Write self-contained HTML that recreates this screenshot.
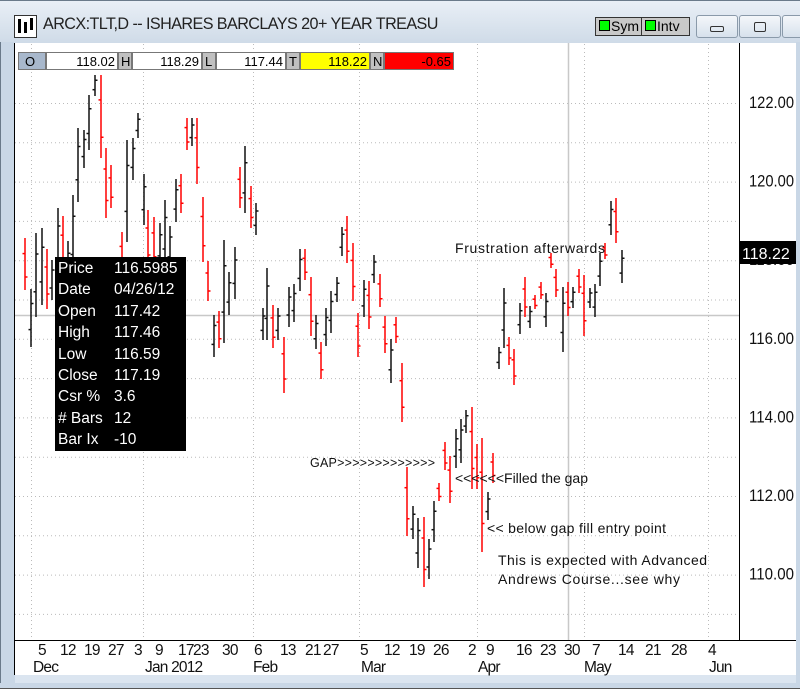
<!DOCTYPE html>
<html><head><meta charset="utf-8"><style>
body{margin:0;width:800px;height:688px;overflow:hidden;background:#dbe5f0;font-family:"Liberation Sans",sans-serif;position:relative}
.abs{position:absolute}
</style></head><body>
<div class="abs" style="left:0;top:0;width:800px;height:42px;background:linear-gradient(#e9eff6,#cfdbe8);border-top:1px solid #6a7a8a"></div>
<div class="abs" style="left:14px;top:15px;width:21px;height:21px;background:#fff;border:1px solid #333"><div style="position:absolute;left:3px;top:3px;width:3px;height:14px;background:#000"></div><div style="position:absolute;left:9px;top:6px;width:3px;height:11px;background:#000"></div><div style="position:absolute;left:15px;top:2px;width:3px;height:12px;background:#000"></div></div>
<div class="abs" style="left:43px;top:14px;font-size:17px;color:#222;letter-spacing:-0.6px;transform:scaleX(0.95);transform-origin:left">ARCX:TLT,D -- ISHARES BARCLAYS 20+ YEAR TREASU</div>
<div class="abs" style="left:595px;top:17px;width:45px;height:17px;background:#c8c8c8;border:1px solid #333;font-size:14px;line-height:17px"><span style="display:inline-block;width:9px;height:9px;background:#0f0;border:1px solid #000;margin:0 1px 0 3px"></span>Sym</div>
<div class="abs" style="left:641px;top:17px;width:47px;height:17px;background:#c8c8c8;border:1px solid #333;font-size:14px;line-height:17px"><span style="display:inline-block;width:9px;height:9px;background:#0f0;border:1px solid #000;margin:0 1px 0 3px"></span>Intv</div>
<div class="abs" style="left:696px;top:15px;width:40px;height:21px;border:1px solid #8a9aaa;border-radius:3px;background:linear-gradient(#f4f7fa,#d7e1ec)"><div style="margin:10px auto 0;width:12px;height:4px;border:1px solid #333;border-radius:2px"></div></div>
<div class="abs" style="left:739px;top:15px;width:40px;height:21px;border:1px solid #8a9aaa;border-radius:3px;background:linear-gradient(#f4f7fa,#d7e1ec)"><div style="margin:6px auto 0;width:10px;height:8px;border:1px solid #333;border-radius:2px"></div></div>
<div class="abs" style="left:782px;top:15px;width:30px;height:21px;border:1px solid #8a9aaa;border-radius:3px;background:linear-gradient(#f4f7fa,#d7e1ec)"></div>
<div class="abs" style="left:0;top:42px;width:14px;height:646px;background:#c9d7e6;border-left:1px solid #6a7a8a"></div>
<div class="abs" style="left:796px;top:42px;width:4px;height:646px;background:#c9d7e6"></div>
<div class="abs" style="left:0;top:683px;width:800px;height:5px;background:#c9d7e6;border-bottom:1px solid #555"></div>
<svg class="abs" style="left:0;top:0" width="800" height="688" id="ch">
<rect x="14" y="43" width="782" height="632" fill="#fff"/>
<line x1="14.5" y1="43" x2="14.5" y2="675" stroke="#000"/>
<line x1="739.5" y1="43" x2="739.5" y2="640" stroke="#000"/>
<line x1="14" y1="640.5" x2="796" y2="640.5" stroke="#000"/>
<g id="grid" stroke="#bbb" stroke-dasharray="1,3"></g>
<line x1="15" y1="315.5" x2="739" y2="315.5" stroke="#c8c8c8" stroke-width="1.5"/>
<line x1="568.5" y1="43" x2="568.5" y2="640" stroke="#c8c8c8" stroke-width="1.5"/>
<g id="bars" stroke-width="1.5"></g>
<g font-family="Liberation Sans,sans-serif" font-size="15" fill="#111" id="ax"></g>
<rect x="739" y="241" width="57" height="23" fill="#000"/>
<text x="742" y="259" font-size="16" fill="#fff" font-family="Liberation Sans,sans-serif">118.22</text>
<g font-family="Liberation Sans,sans-serif" font-size="14" fill="#111">
<text x="455" y="253" textLength="150">Frustration afterwards</text>
<text x="310" y="467" font-size="12.5" textLength="125">GAP&gt;&gt;&gt;&gt;&gt;&gt;&gt;&gt;&gt;&gt;&gt;&gt;&gt;</text>
<text x="455" y="483" textLength="133">&lt;&lt;&lt;&lt;&lt;&lt;Filled the gap</text>
<text x="487" y="533" textLength="179">&lt;&lt; below gap fill entry point</text>
<text x="498" y="565" textLength="209">This is expected with Advanced</text>
<text x="498" y="584" textLength="182">Andrews Course...see why</text>
</g>
</svg>
<div class="abs" style="left:18px;top:52px;height:18px;font-size:13px;line-height:18px;display:flex">
<div style="width:20px;background:#a8b8cc;border:1px solid #777;padding-left:6px">O</div>
<div style="width:68px;background:#fff;border:1px solid #777;text-align:right;padding-right:2px">118.02</div>
<div style="width:10px;background:#c0c0c0;border:1px solid #777;padding-left:2px">H</div>
<div style="width:66px;background:#fff;border:1px solid #777;text-align:right;padding-right:2px">118.29</div>
<div style="width:10px;background:#c0c0c0;border:1px solid #777;padding-left:2px">L</div>
<div style="width:66px;background:#fff;border:1px solid #777;text-align:right;padding-right:2px">117.44</div>
<div style="width:10px;background:#c0c0c0;border:1px solid #777;padding-left:2px">T</div>
<div style="width:66px;background:#ff0;border:1px solid #777;text-align:right;padding-right:2px">118.22</div>
<div style="width:10px;background:#c0c0c0;border:1px solid #777;padding-left:2px">N</div>
<div style="width:66px;background:#f00;border:1px solid #777;text-align:right;padding-right:2px">-0.65</div>
</div>
<div class="abs" style="left:55px;top:257px;width:128px;height:193px;background:#000;color:#fff;font-size:15.5px;line-height:21.4px;padding:1px 0 0 3px">
<div><span style="display:inline-block;width:56px">Price</span>116.5985</div>
<div><span style="display:inline-block;width:56px">Date</span>04/26/12</div>
<div><span style="display:inline-block;width:56px">Open</span>117.42</div>
<div><span style="display:inline-block;width:56px">High</span>117.46</div>
<div><span style="display:inline-block;width:56px">Low</span>116.59</div>
<div><span style="display:inline-block;width:56px">Close</span>117.19</div>
<div><span style="display:inline-block;width:56px">Csr %</span>3.6</div>
<div><span style="display:inline-block;width:56px"># Bars</span>12</div>
<div><span style="display:inline-block;width:56px">Bar Ix</span>-10</div>
</div>
<script>
var NS="http://www.w3.org/2000/svg";
function el(p,t,a,txt){var e=document.createElementNS(NS,t);for(var k in a)e.setAttribute(k,a[k]);if(txt)e.textContent=txt;p.appendChild(e);return e;}
var g=document.getElementById("grid");
for(var k=0;k<14;k++){var y=103.5+k*39.3;if(y>640)break;el(g,"line",{x1:15,y1:y,x2:739,y2:y});}
[31,143,253,359,477,584,708].forEach(function(x){el(g,"line",{x1:x+.5,y1:44,x2:x+.5,y2:640});});
var D=[[25,238,290,'r'],[31,289,347,'b'],[36,233,317,'b'],[42,228,305,'b'],[47,249,309,'r'],[52,260,300,'b'],[58,208,280,'b'],[63,216,280,'r'],[68,241,290,'b'],[73,195,280,'b'],[78,128,202,'b'],[84,130,168,'b'],[89,95,150,'b'],[95,75,96,'b'],[101,75,158,'r'],[106,148,218,'r'],[111,165,208,'r'],[122,232,280,'r'],[127,140,242,'b'],[133,138,180,'b'],[138,113,138,'b'],[144,174,225,'b'],[148,210,270,'r'],[154,217,270,'r'],[160,223,270,'b'],[165,200,270,'b'],[170,226,270,'b'],[176,179,222,'b'],[181,174,213,'r'],[187,118,150,'r'],[192,118,146,'b'],[197,118,184,'r'],[203,197,262,'r'],[208,261,301,'r'],[214,315,357,'b'],[219,311,348,'r'],[224,240,343,'b'],[229,272,315,'b'],[235,247,299,'b'],[240,167,208,'r'],[245,146,213,'b'],[251,186,228,'r'],[256,203,235,'b'],[263,308,340,'b'],[267,268,340,'b'],[273,305,348,'r'],[278,308,340,'b'],[284,337,393,'r'],[289,287,327,'b'],[294,284,322,'b'],[300,249,291,'b'],[305,249,280,'r'],[311,277,336,'r'],[316,315,349,'b'],[321,342,379,'r'],[326,308,346,'b'],[331,291,333,'b'],[337,277,302,'b'],[342,227,256,'b'],[347,216,263,'r'],[353,243,301,'r'],[358,313,357,'r'],[364,280,317,'b'],[369,281,329,'r'],[374,255,283,'b'],[380,274,307,'r'],[385,316,353,'r'],[391,339,383,'b'],[396,317,343,'r'],[402,363,422,'r'],[407,467,536,'r'],[413,506,539,'b'],[418,518,568,'b'],[424,517,587,'r'],[429,539,579,'b'],[434,501,542,'b'],[439,483,501,'r'],[445,442,470,'r'],[450,456,503,'r'],[456,429,468,'b'],[461,419,463,'b'],[466,410,433,'b'],[472,407,489,'r'],[477,444,489,'r'],[482,438,552,'r'],[488,492,520,'b'],[493,453,483,'r'],[499,347,369,'b'],[504,288,348,'b'],[509,337,365,'r'],[514,349,385,'r'],[520,303,334,'b'],[525,277,317,'r'],[530,306,328,'b'],[535,295,309,'r'],[541,282,299,'r'],[546,293,327,'b'],[551,253,268,'r'],[556,269,297,'r'],[563,287,352,'b'],[568,282,316,'r'],[573,287,308,'b'],[579,269,293,'r'],[584,275,336,'r'],[590,288,308,'b'],[595,284,317,'b'],[600,253,286,'b'],[605,243,259,'r'],[611,201,235,'b'],[616,198,243,'r'],[622,250,283,'b']];
var b=document.getElementById("bars");
D.forEach(function(d,i){var c=d[3]=='r'?'#f00':'#111';var h=d[2]-d[1];var o,cl;
if(d[3]=='r'){o=d[1]+h*0.3;cl=d[1]+h*0.75;}else{o=d[1]+h*0.7;cl=d[1]+h*0.25;}
el(b,"line",{x1:d[0],y1:d[1],x2:d[0],y2:d[2],stroke:c});
el(b,"line",{x1:d[0]-2.5,y1:o,x2:d[0],y2:o,stroke:c});
el(b,"line",{x1:d[0],y1:cl,x2:d[0]+2.5,y2:cl,stroke:c});});
var ax=document.getElementById("ax");
[122,120,118,116,114,112,110].forEach(function(p,i){if(p==118)return;el(ax,"text",{x:749,y:108+i*78.6,"font-size":16.5,textLength:45,lengthAdjust:"spacingAndGlyphs"},p.toFixed(2));});
el(ax,"text",{x:749,y:265,"font-size":16.5,textLength:45,lengthAdjust:"spacingAndGlyphs"},"118.00");
var dd=[[5,38],[12,60],[19,84],[27,108],[3,134],[9,155],[17,178],[23,193],[30,222],[6,254],[13,280],[21,305],[27,323],[5,360],[12,384],[19,409],[26,433],[2,468],[9,486],[16,516],[23,540],[30,564],[7,592],[14,618],[21,645],[28,671],[4,708]];
dd.forEach(function(d){el(ax,"text",{x:d[1],y:655,"font-size":15.5,"letter-spacing":-0.8},String(d[0]));});
[["Dec",33],["Jan 2012",145],["Feb",253],["Mar",361],["Apr",478],["May",584],["Jun",709]].forEach(function(d){el(ax,"text",{x:d[1],y:672,"font-size":15.5,"letter-spacing":-0.8},d[0]);});
</script>
</body></html>
